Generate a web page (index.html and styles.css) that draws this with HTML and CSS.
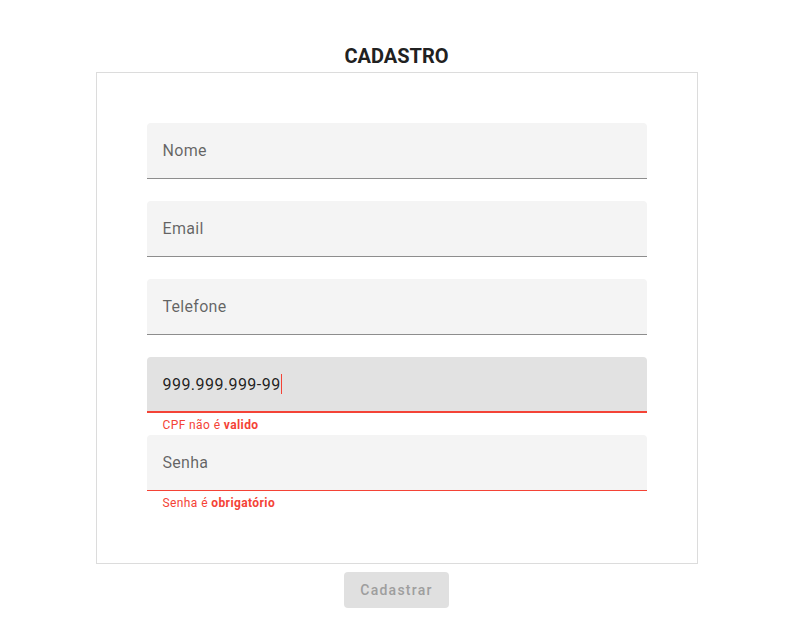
FILE: index.html
```html
<!DOCTYPE html>
<html lang="pt">
<head>
<meta charset="utf-8">
<title>Cadastro</title>
<link rel="stylesheet" href="styles.css">
</head>
<body>
<main class="page">
  <h1 class="title">CADASTRO</h1>
  <form class="card">
    <div class="field">
      <div class="box"><span class="label">Nome</span></div>
      <div class="helper"></div>
    </div>
    <div class="field">
      <div class="box"><span class="label">Email</span></div>
      <div class="helper"></div>
    </div>
    <div class="field">
      <div class="box"><span class="label">Telefone</span></div>
      <div class="helper"></div>
    </div>
    <div class="field">
      <div class="box focused error"><span class="value">999.999.999-99</span><span class="caret"></span></div>
      <div class="helper err">CPF não é <strong>valido</strong></div>
    </div>
    <div class="field">
      <div class="box error"><span class="label">Senha</span></div>
      <div class="helper err">Senha é <strong>obrigatório</strong></div>
    </div>
  </form>
  <button class="btn" type="button" disabled>Cadastrar</button>
</main>
</body>
</html>
```
FILE: styles.css
```css
* { box-sizing: border-box; }
html, body { margin: 0; padding: 0; background: #fff; }
body { font-family: Roboto, "Noto Sans", sans-serif; padding-left: 8px; }
.page {
  width: 602px;
  margin: 0 auto;
  padding-top: 44px;
  display: flex;
  flex-direction: column;
  align-items: center;
}
.title {
  margin: 0 0 4px;
  font-size: 20px;
  line-height: 24px;
  font-weight: 700;
  color: #212121;
}
.card {
  width: 602px;
  border: 1px solid #dcdcdc;
  padding: 50px;
  display: flex;
  flex-direction: column;
}
.field { display: flex; flex-direction: column; }
.box {
  height: 56px;
  background: #f4f4f4;
  border-radius: 4px 4px 0 0;
  border-bottom: 1px solid #8d8d8d;
  padding: 0 16px;
  display: flex;
  align-items: center;
}
.box.focused { background: #e2e2e2; border-bottom: 2px solid #f44336; }
.box.error { border-bottom-color: #f44336; }
.label { font-size: 16px; color: rgba(0,0,0,0.6); letter-spacing: 0.3px; padding-bottom: 1px; }
.value { font-size: 16px; color: rgba(0,0,0,0.87); letter-spacing: 0.45px; padding-top: 1px; }
.caret { display: inline-block; width: 1px; height: 20px; background: #f44336; }
.helper {
  height: 22px;
  padding: 1px 16px 0;
  font-size: 12px;
  line-height: 22px;
  letter-spacing: 0.4px;
}
.helper.err { color: #f44336; }
.helper strong { font-weight: 700; }
.btn {
  margin-top: 8px;
  height: 36px;
  padding: 0 16px;
  border: none;
  border-radius: 4px;
  background: #e0e0e0;
  color: #9e9e9e;
  font-family: Roboto, "Noto Sans", sans-serif;
  font-size: 14px;
  font-weight: 500;
  letter-spacing: 1.25px;
}
```
